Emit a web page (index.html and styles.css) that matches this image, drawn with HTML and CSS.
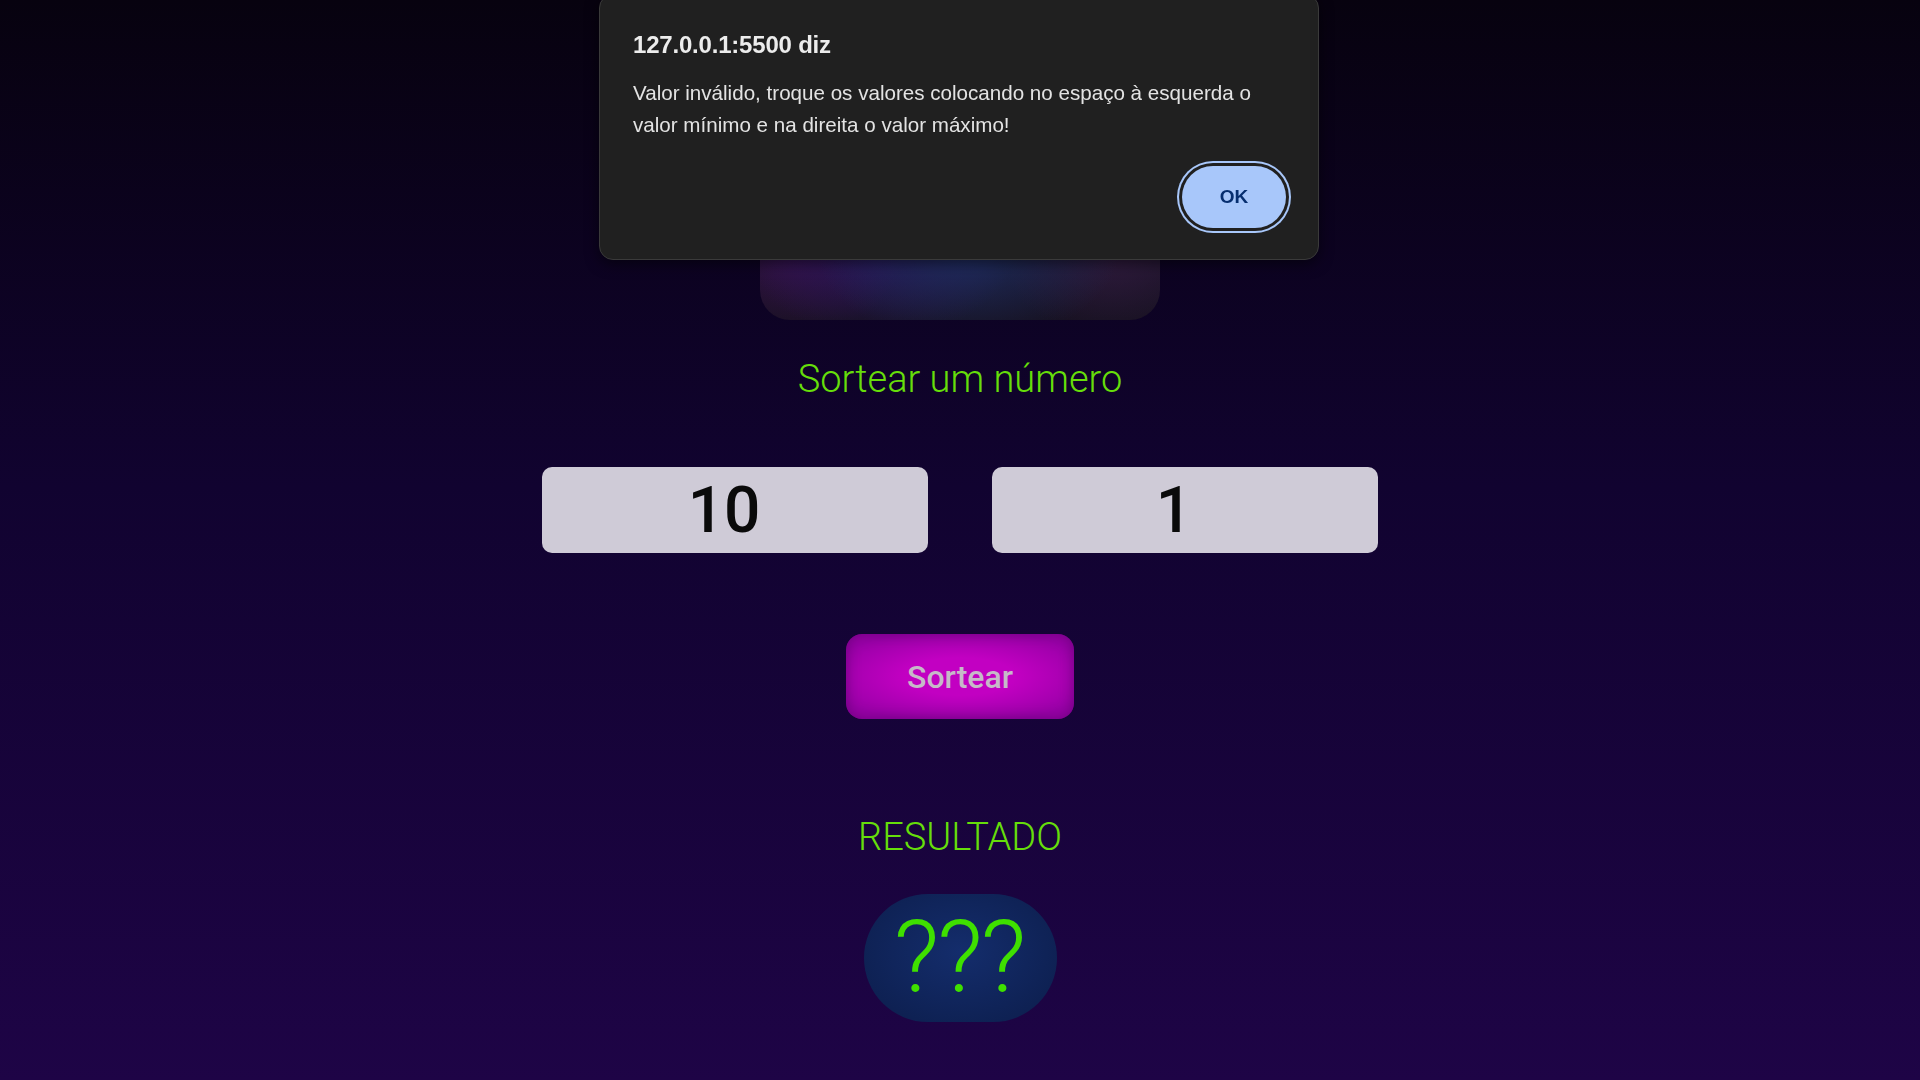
FILE: index.html
```html
<!DOCTYPE html>
<html lang="pt-BR">
<head>
<meta charset="utf-8">
<title>Sorteador</title>
<link rel="stylesheet" href="styles.css">
</head>
<body>
<main class="page">
  <div class="hero"></div>
  <h1 class="title">Sortear um número</h1>
  <div class="inputs">
    <input class="num" type="text" value="10">
    <input class="num" type="text" value="1">
  </div>
  <button class="draw">Sortear</button>
  <h2 class="result-title">RESULTADO</h2>
  <div class="result">???</div>
</main>
<div class="dialog">
  <div class="dialog-title">127.0.0.1:5500 diz</div>
  <div class="dialog-msg">Valor inválido, troque os valores colocando no espaço à esquerda o<br>valor mínimo e na direita o valor máximo!</div>
  <div class="dialog-actions"><button class="ok">OK</button></div>
</div>
</body>
</html>
```
FILE: styles.css
```css
html, body {
  margin: 0;
  padding: 0;
  height: 100%;
}
body {
  background: linear-gradient(to bottom, #07020f 0%, #110330 45%, #1e0446 100%);
  font-family: Roboto, "Liberation Sans", sans-serif;
  overflow: hidden;
}
.page {
  display: flex;
  flex-direction: column;
  align-items: center;
}
.hero {
  width: 400px;
  height: 300px;
  margin-top: 20px;
  border-radius: 30px;
  background:
    radial-gradient(ellipse 38% 32% at 52% 76%, rgba(30, 48, 100, 0.9) 0%, rgba(30, 48, 100, 0) 100%),
    radial-gradient(ellipse 34% 30% at 30% 76%, rgba(45, 22, 100, 0.85) 0%, rgba(45, 22, 100, 0) 100%),
    radial-gradient(ellipse 28% 30% at 8% 76%, rgba(60, 18, 80, 0.85) 0%, rgba(60, 18, 80, 0) 100%),
    radial-gradient(ellipse 28% 30% at 88% 76%, rgba(55, 30, 70, 0.75) 0%, rgba(55, 30, 70, 0) 100%),
    linear-gradient(to bottom, #1c1230 0%, #1a1226 80%, #161120 100%);
}
.title {
  margin: 37px 0 0;
  font-size: 38px;
  line-height: 45px;
  font-weight: 300;
  color: #66de0a;
}
.inputs {
  display: flex;
  gap: 64px;
  margin-top: 65px;
}
.num {
  box-sizing: border-box;
  width: 386px;
  height: 86px;
  border: none;
  border-radius: 10px;
  background: #cfcbd7;
  color: #0a0a0a;
  font-family: Roboto, sans-serif;
  font-size: 64px;
  font-weight: 500;
  text-align: center;
  padding: 0 22px 0 0;
  outline: none;
}
.draw {
  margin-top: 81px;
  width: 228px;
  height: 85px;
  border: none;
  border-radius: 16px;
  background: radial-gradient(ellipse 60% 55% at 50% 50%, #c200c2 40%, #9a00a8 100%);
  box-shadow: inset 0 0 14px rgba(70, 0, 90, 0.55);
  color: #c6b9c8;
  font-family: Roboto, sans-serif;
  font-size: 32px;
  font-weight: 500;
}
.result-title {
  margin: 96px 0 0;
  font-size: 38px;
  line-height: 45px;
  font-weight: 300;
  color: #66de0a;
}
.result {
  margin-top: 34px;
  width: 193px;
  height: 128px;
  border-radius: 64px;
  background: radial-gradient(ellipse at 50% 45%, #142d6c 0%, #0c1d4b 100%);
  color: #3fe000;
  font-size: 100px;
  font-weight: 300;
  line-height: 128px;
  text-align: center;
  letter-spacing: -2px;
  text-indent: -2px;
}
.dialog {
  position: fixed;
  top: -6px;
  left: 599px;
  width: 720px;
  height: 266px;
  box-sizing: border-box;
  padding: 34px 32px 0 33px;
  background: #202020;
  border: 1px solid #3a3a3a;
  border-radius: 14px;
  box-shadow: 0 4px 14px rgba(0, 0, 0, 0.5);
  font-family: "Liberation Sans", Arial, sans-serif;
  color: #e8e8e8;
}
.dialog-title {
  font-size: 24px;
  font-weight: 700;
  line-height: 32px;
  color: #ececec;
  letter-spacing: -0.2px;
}
.dialog-msg {
  margin-top: 16px;
  font-size: 20.6px;
  line-height: 32px;
  color: #e3e3e3;
  white-space: nowrap;
}
.dialog-actions {
  display: flex;
  justify-content: flex-end;
  margin-top: 25px;
}
.ok {
  width: 104px;
  height: 62px;
  border: none;
  border-radius: 31px;
  background: #a8c7fa;
  box-shadow: 0 0 0 3px #202020, 0 0 0 5px #a8c7fa;
  color: #062e6f;
  font-family: "Liberation Sans", Arial, sans-serif;
  font-size: 19px;
  font-weight: 700;
}
```
